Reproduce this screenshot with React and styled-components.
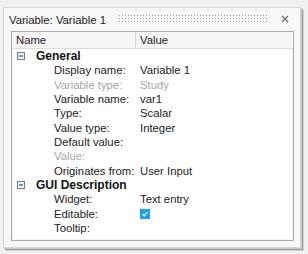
import React from "react";
import styled, { createGlobalStyle } from "styled-components";

const Global = createGlobalStyle`
  html, body { margin: 0; padding: 0; background: #f0f0f0; }
  body { font-family: "Liberation Sans", Arial, sans-serif; }
`;

const Page = styled.div`
  width: 308px;
  height: 254px;
  padding: 7px 0 0 3px;
  box-sizing: border-box;
`;

const Window = styled.div`
  width: 298px;
  height: 241px;
  box-sizing: border-box;
  background: #f7f7f7;
  border: 1px solid #d6d6d6;
  box-shadow: 1px 1px 0 #c8c8c8, 2px 2px 0 #9c9c9c, 3px 3px 0 #d0d0d0;
  display: flex;
  flex-direction: column;
  padding: 0 6px 6px 7px;
`;

const TitleBar = styled.div`
  height: 23px;
  display: flex;
  align-items: center;
  gap: 12px;
  flex: none;
`;

const Title = styled.span`
  font-size: 11.3px;
  color: #222;
  white-space: nowrap;
  margin-left: -2px;
`;

const Grip = styled.div`
  flex: 1;
  height: 9px;
  margin-top: -2px;
  background-image: radial-gradient(circle, #9a9a9a 0.6px, transparent 0.9px);
  background-size: 3px 3px;
  background-position: 0 0;
`;

const Close = styled.svg`
  width: 8px;
  height: 8px;
  margin-right: 5px;
  margin-left: 2px;
  margin-top: -2px;
  flex: none;
`;

const Table = styled.div`
  flex: 1;
  background: #fff;
  border: 1px solid #a9a9a9;
  box-shadow: inset 0 0 0 1px #f2f2f2;
  display: flex;
  flex-direction: column;
`;

const Header = styled.div`
  display: grid;
  grid-template-columns: 124px 1fr;
  height: 16px;
  background: #f6f6f6;
  border-bottom: 1px solid #dadada;
  font-size: 11.3px;
  color: #222;
`;

const HeadCell = styled.div`
  display: flex;
  align-items: center;
  padding-left: ${(p) => p.$pad}px;
  border-right: ${(p) => (p.$divider ? "1px solid #dadada" : "none")};
`;

const Row = styled.div`
  display: grid;
  grid-template-columns: 128px 1fr;
  height: 14.33px;
  align-items: center;
  font-size: 11.3px;
  white-space: nowrap;
`;

const GroupRow = styled.div`
  height: 14.33px;
  display: flex;
  align-items: center;
  padding-left: 5px;
  gap: 11px;
  font-size: 12px;
  font-weight: bold;
  color: #111;
`;

const Label = styled.div`
  padding-left: 42px;
  color: ${(p) => (p.$dim ? "#a6a6a6" : "#222")};
`;

const Value = styled.div`
  color: ${(p) => (p.$dim ? "#a6a6a6" : "#222")};
  display: flex;
  align-items: center;
`;

const Toggle = styled.svg`
  width: 8px;
  height: 8px;
  flex: none;
`;

const Check = styled.span`
  width: 10px;
  height: 10px;
  background: #1a9fe8;
  display: inline-flex;
  align-items: center;
  justify-content: center;
`;

const Minus = () => (
  <Toggle viewBox="0 0 8 8">
    <rect x="0.5" y="0.5" width="7" height="7" fill="#eef1f6" stroke="#6f7f95" />
    <rect x="2" y="3.5" width="4" height="1" fill="#2b3b55" />
  </Toggle>
);

const rows1 = [
  ["Display name:", "Variable 1"],
  ["Variable type:", "Study", true],
  ["Variable name:", "var1"],
  ["Type:", "Scalar"],
  ["Value type:", "Integer"],
  ["Default value:", ""],
  ["Value:", "", true],
  ["Originates from:", "User Input"],
];

export default function App() {
  return (
    <>
      <Global />
      <Page>
        <Window>
          <TitleBar>
            <Title>Variable: Variable 1</Title>
            <Grip />
            <Close viewBox="0 0 8 8">
              <path d="M1 1 L7 7 M7 1 L1 7" stroke="#6a6a6a" strokeWidth="1.2" />
            </Close>
          </TitleBar>
          <Table>
            <Header>
              <HeadCell $pad={4} $divider>Name</HeadCell>
              <HeadCell $pad={4}>Value</HeadCell>
            </Header>
            <GroupRow>
              <Minus />
              General
            </GroupRow>
            {rows1.map(([l, v, dim]) => (
              <Row key={l}>
                <Label $dim={dim}>{l}</Label>
                <Value $dim={dim}>{v}</Value>
              </Row>
            ))}
            <GroupRow>
              <Minus />
              GUI Description
            </GroupRow>
            <Row>
              <Label>Widget:</Label>
              <Value>Text entry</Value>
            </Row>
            <Row>
              <Label>Editable:</Label>
              <Value>
                <Check>
                  <svg width="8" height="8" viewBox="0 0 8 8">
                    <path d="M1.5 4 L3.3 5.8 L6.5 2.2" stroke="#fff" strokeWidth="1.2" fill="none" />
                  </svg>
                </Check>
              </Value>
            </Row>
            <Row>
              <Label>Tooltip:</Label>
              <Value />
            </Row>
          </Table>
        </Window>
      </Page>
    </>
  );
}
